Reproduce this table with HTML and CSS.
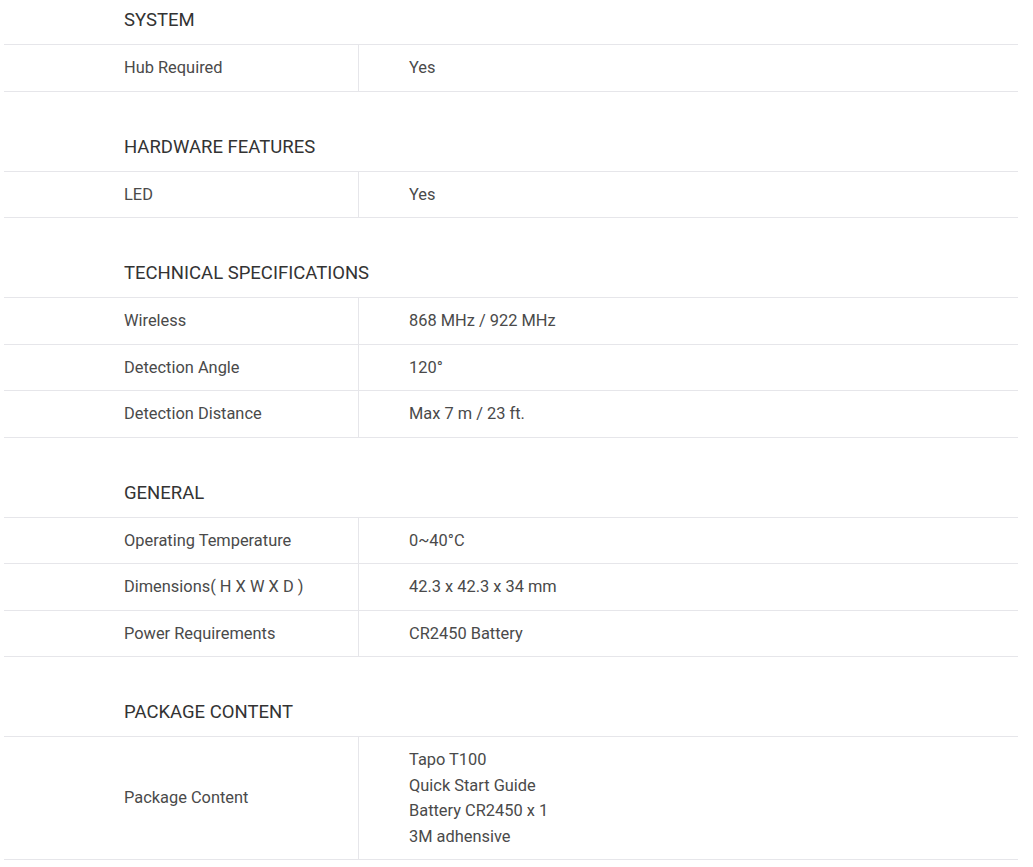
FILE: index.html
```html
<!DOCTYPE html>
<html lang="en">
<head>
<meta charset="utf-8">
<title>Specifications</title>
<link rel="stylesheet" href="styles.css">
</head>
<body>
<div class="specs">
  <section class="group">
    <h3 class="group-title">SYSTEM</h3>
    <table class="spec-table">
      <tr><th>Hub Required</th><td>Yes</td></tr>
    </table>
  </section>
  <section class="group">
    <h3 class="group-title">HARDWARE FEATURES</h3>
    <table class="spec-table">
      <tr><th>LED</th><td>Yes</td></tr>
    </table>
  </section>
  <section class="group">
    <h3 class="group-title">TECHNICAL SPECIFICATIONS</h3>
    <table class="spec-table">
      <tr><th>Wireless</th><td>868 MHz / 922 MHz</td></tr>
      <tr><th>Detection Angle</th><td>120°</td></tr>
      <tr><th>Detection Distance</th><td>Max 7 m / 23 ft.</td></tr>
    </table>
  </section>
  <section class="group">
    <h3 class="group-title">GENERAL</h3>
    <table class="spec-table">
      <tr><th>Operating Temperature</th><td>0~40°C</td></tr>
      <tr><th>Dimensions( H X W X D )</th><td>42.3 x 42.3 x 34 mm</td></tr>
      <tr><th>Power Requirements</th><td>CR2450 Battery</td></tr>
    </table>
  </section>
  <section class="group">
    <h3 class="group-title">PACKAGE CONTENT</h3>
    <table class="spec-table">
      <tr><th>Package Content</th><td>Tapo T100<br>Quick Start Guide<br>Battery CR2450 x 1<br>3M adhensive</td></tr>
    </table>
  </section>
</div>
</body>
</html>
```
FILE: styles.css
```css
html, body {
  margin: 0;
  padding: 0;
  background: #fff;
}
body {
  font-family: Roboto, "Liberation Sans", sans-serif;
  color: #4a4a4a;
}
.specs {
  margin: 0 15px 0 4px;
  width: 1014px;
}
.group {
  padding-top: 35px;
}
.group:first-child {
  padding-top: 0;
}
.group-title {
  margin: 0;
  padding: 0 0 4px 120px;
  height: 40px;
  line-height: 40px;
  font-size: 18.5px;
  font-weight: 400;
  color: #333;
  border-bottom: 1px solid #e6e6ea;
  box-sizing: content-box;
}
.spec-table {
  width: 100%;
  border-collapse: collapse;
  font-size: 16.4px;
  line-height: 25.5px;
}
.spec-table th,
.spec-table td {
  padding: 10px 0;
  border-bottom: 1px solid #e6e6ea;
  text-align: left;
  font-weight: 400;
  vertical-align: middle;
}
.spec-table th {
  width: 234px;
  padding-left: 120px;
  border-right: 1px solid #e6e6ea;
}
.spec-table td {
  padding-left: 50px;
}
```
